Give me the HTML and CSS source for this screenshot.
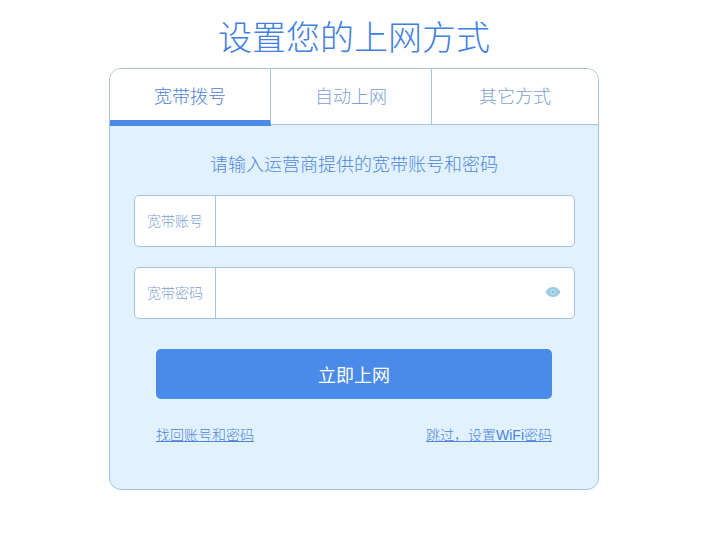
FILE: index.html
```html
<!DOCTYPE html>
<html lang="zh-CN">
<head>
    <meta charset="UTF-8">
    <title>设置您的上网方式</title>
    <link rel="stylesheet" href="styles.css">
</head>
<body>
    <div class="page">
        <h1 class="page-title">设置您的上网方式</h1>
        <div class="panel">
            <ul class="tabs">
                <li class="tab tab-first active">宽带拨号</li>
                <li class="tab tab-second">自动上网</li>
                <li class="tab tab-third">其它方式</li>
            </ul>
            <div class="panel-body">
                <p class="hint">请输入运营商提供的宽带账号和密码</p>
                <div class="field">
                    <label class="field-label">宽带账号</label>
                    <div class="field-input"></div>
                </div>
                <div class="field">
                    <label class="field-label">宽带密码</label>
                    <div class="field-input">
                        <svg class="eye" viewBox="0 0 16 12">
                            <path fill="#9ccbe2" d="M0.5 6C2.2 2.6 5 1 8 1s5.8 1.6 7.5 5C13.8 9.4 11 11 8 11S2.2 9.4 0.5 6z"/>
                            <circle cx="8" cy="6" r="3" fill="#b9dcee"/>
                            <circle cx="8" cy="6" r="1.6" fill="#8fc2dc"/>
                        </svg>
                    </div>
                </div>
                <button class="submit-btn">立即上网</button>
                <div class="links">
                    <a href="#">找回账号和密码</a>
                    <a href="#">跳过，设置WiFi密码</a>
                </div>
            </div>
        </div>
    </div>
</body>
</html>
```

FILE: styles.css
```css
* {
    margin: 0;
    padding: 0;
    box-sizing: border-box;
}

body {
    font-family: "Liberation Sans", "Noto Sans CJK SC", sans-serif;
    font-weight: 300;
    background-color: #ffffff;
}

.page {
    width: 490px;
    margin-left: 109px;
}

.page-title {
    font-size: 34px;
    font-weight: 300;
    line-height: 40px;
    text-align: center;
    color: #3f80e2;
    padding-top: 18px;
    height: 68px;
}

.panel {
    height: 422px;
    border: 1px solid #a3c4d9;
    border-radius: 12px;
    background-color: #e1f2fe;
    overflow: hidden;
}

.tabs {
    display: flex;
    list-style: none;
    height: 56px;
    background-color: #ffffff;
    border-bottom: 1px solid #a3c4d9;
}

.tab {
    height: 55px;
    line-height: 57px;
    font-size: 18px;
    text-align: center;
    color: #7c9fd4;
    border-right: 1px solid #a3c4d9;
}

.tab-first {
    width: 161px;
}

.tab-second {
    width: 161px;
}

.tab-third {
    flex: 1;
    border-right: none;
}

.tab.active {
    height: 57px;
    color: #4f82d2;
    border-bottom: 6px solid #4a8ae8;
}

.panel-body {
    padding: 0 24px;
}

.hint {
    font-size: 18px;
    line-height: 26px;
    text-align: center;
    color: #5088da;
    padding-top: 27px;
    height: 70px;
}

.field {
    display: flex;
    width: 441px;
    height: 52px;
    margin-bottom: 20px;
    border: 1px solid #a3c4d9;
    border-radius: 5px;
    background-color: #ffffff;
}

.field-label {
    width: 81px;
    line-height: 50px;
    font-size: 14px;
    text-align: center;
    color: #7c9fd4;
    border-right: 1px solid #a3c4d9;
}

.field-input {
    flex: 1;
    display: flex;
    align-items: center;
    justify-content: flex-end;
    padding-right: 13px;
}

.eye {
    width: 16px;
    height: 12px;
    margin-top: -2px;
}

.submit-btn {
    display: block;
    width: 396px;
    height: 50px;
    margin: 30px 0 0 22px;
    border: none;
    border-radius: 5px;
    background-color: #4a8ae8;
    color: #ffffff;
    font-family: inherit;
    font-weight: 400;
    font-size: 18px;
}

.links {
    display: flex;
    justify-content: space-between;
    width: 396px;
    margin: 26px 0 0 22px;
    font-size: 14px;
    line-height: 20px;
}

.links a {
    color: #4f82d8;
}
```
